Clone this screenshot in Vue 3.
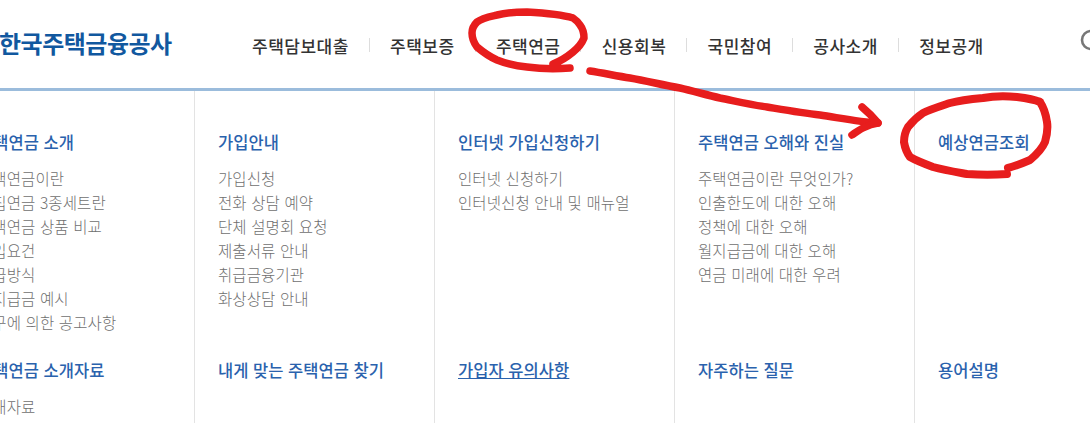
<script setup>
const nav = ['주택담보대출', '주택보증', '주택연금', '신용회복', '국민참여', '공사소개', '정보공개']
const cols = [
  { h: '주택연금 소개', items: ['주택연금이란', '내집연금 3종세트란', '주택연금 상품 비교', '가입요건', '지급방식', '월지급금 예시', '요구에 의한 공고사항'], h2: '주택연금 소개자료', items2: ['안내자료'] },
  { h: '가입안내', items: ['가입신청', '전화 상담 예약', '단체 설명회 요청', '제출서류 안내', '취급금융기관', '화상상담 안내'], h2: '내게 맞는 주택연금 찾기', items2: [] },
  { h: '인터넷 가입신청하기', items: ['인터넷 신청하기', '인터넷신청 안내 및 매뉴얼'], h2: '가입자 유의사항', items2: [], u: true },
  { h: '주택연금 오해와 진실', items: ['주택연금이란 무엇인가?', '인출한도에 대한 오해', '정책에 대한 오해', '월지급금에 대한 오해', '연금 미래에 대한 우려'], h2: '자주하는 질문', items2: [] },
  { h: '예상연금조회', items: [], h2: '용어설명', items2: [] },
]
</script>

<template>
  <div class="page">
    <header class="top">
      <div class="logo">한국주택금융공사</div>
      <nav class="gnb">
        <template v-for="(n, i) in nav" :key="n">
          <i v-if="i" class="sep"></i>
          <a class="gnb-item">{{ n }}</a>
        </template>
      </nav>
      <svg class="search" width="24" height="24" viewBox="0 0 24 24"><circle cx="11" cy="11" r="9" fill="none" stroke="#777" stroke-width="2.6"/></svg>
    </header>
    <div class="menu">
      <section v-for="c in cols" :key="c.h" class="col">
        <div class="block">
          <h3 class="head">{{ c.h }}</h3>
          <ul class="list"><li v-for="i in c.items" :key="i">{{ i }}</li></ul>
        </div>
        <div class="block">
          <h3 class="head" :class="{ under: c.u }">{{ c.h2 }}</h3>
          <ul class="list"><li v-for="i in c.items2" :key="i">{{ i }}</li></ul>
        </div>
      </section>
    </div>
    <svg class="marks" width="1090" height="423" viewBox="0 0 1090 423" fill="none" stroke="#e71d1d" stroke-width="7.5" stroke-linecap="round" stroke-linejoin="round">
      <path d="M573 18 C560 14 545 13 527 12 C515 12 505 13 497 15 C488 17 482 18 477 22 C473 26 472 29 472 33 C472 38 474 43 477 47 C483 52 490 57 497 60 C507 64 517 66 527 67 C542 69 556 69 570 68 M553 64 C561 61 567 57 573 52 C578 48 582 43 584 38 C584 33 583 29 580 25 C578 22 576 20 573 18"/>
      <path d="M590 71 C603 73 617 76 630 78 C647 81 663 85 680 88 C693 91 707 95 720 98 C735 101 752 105 767 107 C785 110 802 113 820 115 C840 118 860 122 878 123"/>
      <path d="M862 107 C868 112 873 117 878 123 C871 124 867 126 863 128 C859 130 855 133 852 135"/>
      <path stroke-width="8" d="M1040 102 C1033 99 1025 98 1017 97 C1006 96 994 96 983 98 C972 99 961 100 950 103 C941 106 931 109 923 113 C917 117 912 122 908 127 C905 132 904 137 904 142 C905 148 907 153 910 157 C917 161 925 164 933 167 C944 170 956 172 967 174 C981 175 994 175 1007 174 M1008 168 C1016 166 1023 163 1030 160 C1036 155 1042 149 1045 142 C1047 135 1048 128 1047 122 C1046 115 1044 108 1040 102"/>
    </svg>
  </div>
</template>

<style>
html, body { margin: 0; background: #fff; }
</style>

<style scoped>
.page { position: relative; width: 1090px; height: 423px; overflow: hidden; background: #fff; font-family: "Noto Sans CJK KR", "Noto Sans", sans-serif; }
.top { position: relative; height: 88px; border-bottom: 3px solid #9bbcdc; display: flex; align-items: center; }
.logo { width: 252px; flex: none; font-size: 24px; font-weight: 700; color: #11589f; letter-spacing: -.5px; white-space: nowrap; padding-bottom: 3px; margin-left: -1px; }
.gnb { display: flex; align-items: center; padding-top: 2px; margin-left: 1px; }
.gnb-item { font-size: 17px; font-weight: 500; color: #333; letter-spacing: .5px; white-space: nowrap; }
.sep { width: 1px; height: 14px; margin: 0 20.25px 0 20px; background: #ddd; }
.search { position: absolute; left: 1080px; top: 29px; }
.menu { display: grid; grid-template-columns: repeat(5, 240px); margin-left: -45px; width: 1200px; height: 332px; }
.col { border-right: 1px solid #e3e3e3; padding: 39px 0 0 23px; box-sizing: border-box; display: flex; flex-direction: column; }
.block { height: 228px; }
.head { margin: 0 0 12px; font-size: 16.5px; line-height: 24px; font-weight: 500; color: #2a62ad; white-space: nowrap; letter-spacing: .1px; word-spacing: .6px; }
.under { text-decoration: underline; }
.list { list-style: none; margin: 0; padding: 0; }
.list li { font-size: 15.5px; line-height: 24px; color: #6f6f6f; white-space: nowrap; font-weight: 300; letter-spacing: .1px; word-spacing: 1px; }
.marks { position: absolute; left: 0; top: 0; pointer-events: none; }
</style>
